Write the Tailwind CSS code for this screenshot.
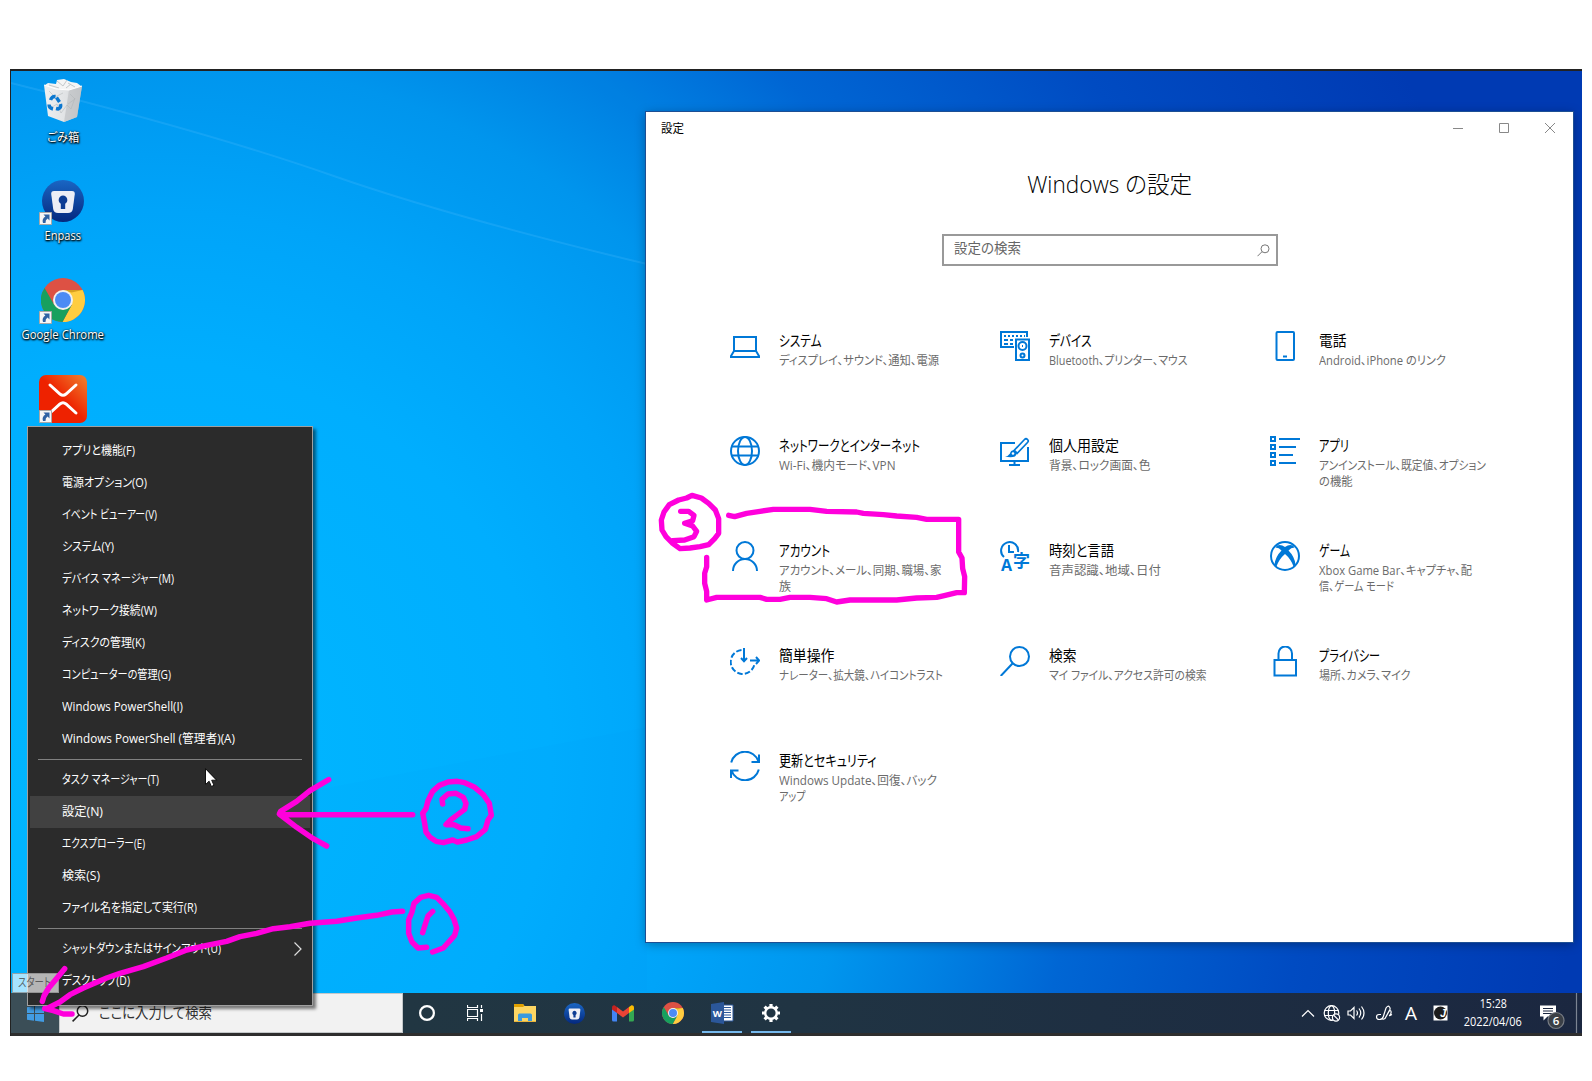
<!DOCTYPE html>
<html lang="ja">
<head>
<meta charset="utf-8">
<title>Windows の設定</title>
<script src="https://cdn.jsdelivr.net/npm/@tailwindcss/browser@4"></script>
</head>
<body class="bg-white overflow-hidden font-['Open_Sans','Noto_Sans_CJK_JP',sans-serif] [font-feature-settings:'palt']">

<svg class="absolute size-0" aria-hidden="true">
  <defs>
    <linearGradient id="enp" x1="0" y1="0" x2="0" y2="1"><stop offset="0" stop-color="#1a66c4"/><stop offset="1" stop-color="#04287e"/></linearGradient>
    <linearGradient id="xm" x1="0" y1="1" x2="1" y2="0"><stop offset=".5" stop-color="#ee2200"/><stop offset="1" stop-color="#ee8430"/></linearGradient>
    <linearGradient id="bin" x1="0" y1="0" x2="1" y2="0"><stop offset="0" stop-color="#eef0f1"/><stop offset=".6" stop-color="#e0e2e4"/><stop offset="1" stop-color="#b9bdc0"/></linearGradient>
    <symbol id="chrome" viewBox="0 0 44 44">
      <circle cx="22" cy="22" r="22" fill="#dd5144"/>
      <path d="M22 12H41.6A22 22 0 0 1 21.5 44L30.7 27z" fill="#ffcd40"/>
      <path d="M3.6 10A22 22 0 0 0 21.5 44L30.7 27 22 32 13.3 27z" fill="#17a05e"/>
      <path d="M22 12h19.6l-11 2.600z" fill="#d8a020"/>
      <circle cx="22" cy="22" r="10" fill="#f1f1f1"/><circle cx="22" cy="22" r="8" fill="#4c8bf5"/>
    </symbol>
    <symbol id="enpass" viewBox="0 0 42 42">
      <circle cx="21" cy="21" r="21" fill="url(#enp)"/>
      <path d="M12 11h18q3 0 2.800 3l-2 15q-.6 4-4.800 4H16q-4.200 0-4.800-4l-2-15Q9 11 12 11z" fill="#eceef6"/>
      <path d="M21 15.500a4.500 4.500 0 0 0-2.200 8.300V29h4.400v-5.200A4.500 4.500 0 0 0 21 15.500z" fill="#0c3c94"/>
    </symbol>
    <symbol id="shortcut" viewBox="0 0 13 13">
      <path d="M.5.500h12v12H.5z" fill="#f6f6f6" stroke="#a8a8a8"/>
      <path d="M4.500 2.500h6v6L8.600 6.600Q6.300 8 6.500 11H4Q2.500 7 6.400 4.500z" fill="#2e62a4"/>
    </symbol>
  </defs>
</svg>

<main class="relative w-[1592px] h-[1081px] pl-[10px] pt-[69px]">
  <div class="relative w-[1572px] h-[967px] flex flex-col overflow-hidden bg-[radial-gradient(circle_at_140px_690px,#00b8ff_0px,#00aefe_400px,#00a4f9_550px,#0096ee_705px,#0080e2_815px,#0066d4_930px,#004bc2_1160px,#003ab3_1430px)] border-t-2 border-l border-[#222]">
    <svg class="absolute left-0 top-0" width="640" height="920" fill="none" stroke="#5cc4ff">
      <path d="M0 12Q200 62 320 104T636 193" stroke-width="2" opacity=".22"/>
      <path d="M0 12Q200 62 320 104T636 193V0H0z" fill="#0070d0" stroke="none" opacity=".03"/>
      <path d="M300 720L636 656V920H300z" fill="#0080d8" stroke="none" opacity=".03"/>
    </svg>

    <!-- desktop icons -->
    <div class="relative flex-1 flex flex-col w-[104px] items-center text-[12px] leading-4 text-white [text-shadow:1px_1px_2px_#000,0_1px_2px_#000,0_0_2px_rgba(0,0,0,.7)]">
      <div class="h-[99px] pt-[8px] flex flex-col items-center">
        <svg width="38" height="44" viewBox="0 0 38 44">
          <path d="M1 6L4 4 12 5 13 1 20 0 27 3 33 4 37 7 35 11H3z" fill="#f4f5f5"/>
          <path d="M13 2l6 5 4-6M24 4l7 4M5 6l10 3M22 9l5-4" stroke="#c3c8ca" fill="none"/>
          <path d="M0 6L12 10 25 11 38 7 33 38 20 43 4 37z" fill="url(#bin)"/>
          <path d="M25 11L38 7 33 38 20 43z" fill="#c3c6c8" opacity=".8"/>
          <path d="M5 30l8-5 4 9 6-8 4 4 4-11M26 15l5 5-7 5M5 12l6 6 8-4" stroke="#aeb3b6" opacity=".5" fill="none"/>
          <path d="M0 6L12 10 25 11 38 7" stroke="#fff" fill="none"/>
          <path d="M6.500 21q1.500-4 5-3.500M12.500 18.500l3 4.500M16.500 25q1 4-2.500 5l-2-.5M5 25.500q0 3.500 4 4.500" stroke="#0b78d0" stroke-width="3.400" fill="none"/>
        </svg>
        <span data-w="32" class="mt-[7px] whitespace-nowrap inline-block">ごみ箱</span>
      </div>
      <div class="relative h-[99px] pt-[10px] flex flex-col items-center w-[42px]">
        <svg width="42" height="42"><use href="#enpass"/></svg>
        <svg class="absolute -left-[3px] top-[42px]" width="13" height="13"><use href="#shortcut"/></svg>
        <span data-w="36.5" class="mt-[6px] whitespace-nowrap inline-block">Enpass</span>
      </div>
      <div class="relative h-[99px] w-[46px] pt-[9px] flex flex-col items-center">
        <svg width="44" height="44"><use href="#chrome"/></svg>
        <svg class="absolute -left-[1px] top-[42px]" width="13" height="13"><use href="#shortcut"/></svg>
        <span data-w="82.5" class="mt-[5px] whitespace-nowrap inline-block">Google Chrome</span>
      </div>
      <div class="relative w-[48px] pt-[7px]">
        <svg width="48" height="48"><rect width="48" height="48" rx="7" fill="url(#xm)"/><path d="M11 10l10 9q3 2.500 6 0l10-9M11 38l10-9q3-2.500 6 0l10 9" stroke="#fff" stroke-width="3" stroke-linecap="round" fill="none"/></svg>
        <svg class="absolute left-0 top-[42px]" width="13" height="13"><use href="#shortcut"/></svg>
      </div>
    </div>

    <!-- settings window -->
    <section class="absolute left-[635px] top-[41px] w-[927px] h-[830px] bg-white outline outline-1 outline-[#1d4f94] shadow-[0_2px_10px_rgba(0,0,0,.35)]">
      <header class="h-8 flex items-center pl-[15px] text-[12px] text-black">
        <span data-w="23" class="inline-block origin-left mt-[2px]">設定</span>
        <div class="ml-auto flex text-[#888]">
          <svg width="46" height="32" fill="none" stroke="currentColor"><path d="M18 16.500h10"/></svg>
          <svg width="46" height="32" fill="none" stroke="currentColor"><path d="M18.500 11.500h9v9h-9z"/></svg>
          <svg width="46" height="32" fill="none" stroke="currentColor"><path d="M18 11l10 10M28 11L18 21"/></svg>
        </div>
      </header>
      <h1 class="mt-[22px] h-9 leading-9 text-center text-[24px] font-light text-black"><span data-w="165" class="inline-block whitespace-nowrap">Windows の設定</span></h1>
      <div class="mt-[32px] mx-auto w-[336px] h-[32px] border-2 border-[#999] flex items-center pl-[10px] pr-[6px] text-[14px] text-[#666]">
        <span data-w="67" class="inline-block origin-left whitespace-nowrap -mt-[5px]">設定の検索</span>
        <svg class="ml-auto" width="13" height="13" fill="none" stroke="#777"><circle cx="8" cy="4.800" r="4"/><path d="M5 7.700L.5 12.200"/></svg>
      </div>

      <div class="mt-[65px] ml-[84px] grid grid-cols-[270px_270px_270px] auto-rows-[105px] text-[12px] leading-4 text-[#6b6b6b] whitespace-nowrap">
        <a class="flex gap-[19px]">
          <svg width="30" height="30" fill="none" stroke="#0078d7" stroke-width="2"><path d="M4 6h22v14H4zM4 20l-3 5v1h28v-1l-3-5"/></svg>
          <div class="flex flex-col items-start -mt-px"><b class="inline-block origin-left font-normal text-[15px] leading-5 text-black" data-w="42.500">システム</b><span class="inline-block origin-left mt-[3px]" data-w="160">ディスプレイ、サウンド、通知、電源</span></div>
        </a>
        <a class="flex gap-[19px]">
          <svg width="30" height="30" fill="none" stroke="#0078d7" stroke-width="2"><path d="M14 16H1V1h26v5M4 5h2m2 0h2m2 0h2m2 0h2m2 0h2m2 0h1M4 9h4m2 0h3M4 13h4m2 0h3"/><path d="M16 8.500h13V29H16z"/><circle cx="22.500" cy="15" r="4"/><circle cx="22.500" cy="24.500" r="2"/><path d="M22 15h1"/></svg>
          <div class="flex flex-col items-start -mt-px"><b class="inline-block origin-left font-normal text-[15px] leading-5 text-black" data-w="42.500">デバイス</b><span class="inline-block origin-left mt-[3px]" data-w="138.500">Bluetooth、プリンター、マウス</span></div>
        </a>
        <a class="flex gap-[19px]">
          <svg width="30" height="30" fill="none" stroke="#0078d7" stroke-width="2"><rect x="6.500" y="1" width="17.500" height="28" rx="1"/><path d="M13 25.500h4"/></svg>
          <div class="flex flex-col items-start -mt-px"><b class="inline-block origin-left font-normal text-[15px] leading-5 text-black" data-w="27.500">電話</b><span class="inline-block origin-left mt-[3px]" data-w="127">Android、iPhone のリンク</span></div>
        </a>

        <a class="flex gap-[19px]">
          <svg width="30" height="30" fill="none" stroke="#0078d7" stroke-width="2"><circle cx="15" cy="15" r="14"/><ellipse cx="15" cy="15" rx="7" ry="14"/><path d="M2 10.500h26M2 19.500h26"/></svg>
          <div class="flex flex-col items-start -mt-px"><b class="inline-block origin-left font-normal text-[15px] leading-5 text-black" data-w="141">ネットワークとインターネット</b><span class="inline-block origin-left mt-[3px]" data-w="116.500">Wi-Fi、機内モード、VPN</span></div>
        </a>
        <a class="flex gap-[19px]">
          <svg width="30" height="30" fill="none" stroke="#0078d7" stroke-width="2"><path d="M15 7H1v18h27V11M14.500 25v4M9 29h11"/><path d="M5 20.500q3 0 5-3 1-4 5-3 3 3 0 6-4 1.500-10 0z" fill="#0078d7" stroke="none"/><path d="M14 14.500L24.500 3.500q1.500-1.500 3 0t0 3L17 17.500zM14 14l3.500 3.500" stroke-width="1.700"/><circle cx="13" cy="17.500" r="1.300" fill="#fff" stroke="none"/></svg>
          <div class="flex flex-col items-start -mt-px"><b class="inline-block origin-left font-normal text-[15px] leading-5 text-black" data-w="70">個人用設定</b><span class="inline-block origin-left mt-[3px]" data-w="101.500">背景、ロック画面、色</span></div>
        </a>
        <a class="flex gap-[19px]">
          <svg width="30" height="30" fill="none" stroke="#0078d7" stroke-width="2"><path d="M1 1h4v4H1zM1 9h4v4H1zM1 17h4v4H1zM1 25h4v4H1zM9 3h21M9 11h17M9 19h14M9 27h17"/></svg>
          <div class="flex flex-col items-start -mt-px"><b class="inline-block origin-left font-normal text-[15px] leading-5 text-black" data-w="30">アプリ</b><span class="inline-block origin-left mt-[3px]" data-w="167">アンインストール、既定値、オプション</span><span class="inline-block origin-left" data-w="33.500">の機能</span></div>
        </a>

        <a class="flex gap-[19px]">
          <svg width="30" height="30" fill="none" stroke="#0078d7" stroke-width="2"><circle cx="15" cy="9.500" r="8.500"/><path d="M3 30a12 12 0 0 1 24 0"/></svg>
          <div class="flex flex-col items-start -mt-px"><b class="inline-block origin-left font-normal text-[15px] leading-5 text-black" data-w="51">アカウント</b><span class="inline-block origin-left mt-[3px]" data-w="162.500">アカウント、メール、同期、職場、家</span><span class="inline-block origin-left" data-w="12">族</span></div>
        </a>
        <a class="flex gap-[19px]">
          <svg class="overflow-visible" width="30" height="30" fill="none" stroke="#0078d7" stroke-width="2"><path d="M4 16A8.500 8.500 0 1 1 18 11M9 4v7h5"/><text x="1" y="30" font-size="16" font-weight="700" fill="#0078d7" stroke="none">A</text><text x="13" y="26" font-size="17" font-weight="700" fill="#0078d7" stroke="none">字</text></svg>
          <div class="flex flex-col items-start -mt-px"><b class="inline-block origin-left font-normal text-[15px] leading-5 text-black" data-w="65">時刻と言語</b><span class="inline-block origin-left mt-[3px]" data-w="112">音声認識、地域、日付</span></div>
        </a>
        <a class="flex gap-[19px]">
          <svg width="30" height="30"><circle cx="15" cy="15" r="14" fill="none" stroke="#0078d7" stroke-width="2"/><path d="M7 4.500Q11 3 15 6q4-3 8-1.500l1.500 2Q21 6.500 18.500 9.500q6 6 7 14L24 26.500Q21 18 15 13 9 18 6 26.500L4.500 23.500q1-8 7-14Q9 6.500 5.500 6.500z" fill="#0078d7"/></svg>
          <div class="flex flex-col items-start -mt-px"><b class="inline-block origin-left font-normal text-[15px] leading-5 text-black" data-w="31">ゲーム</b><span class="inline-block origin-left mt-[3px]" data-w="153">Xbox Game Bar、キャプチャ、配</span><span class="inline-block origin-left" data-w="75">信、ゲーム モード</span></div>
        </a>

        <a class="flex gap-[19px]">
          <svg width="30" height="30" fill="none" stroke="#0078d7" stroke-width="2"><path d="M11.500 4A12 12 0 1 0 24.500 18" stroke-dasharray="5.500 2.200"/><path d="M14 2v13M20 14.500h9M11 12l3 3.200 3-3.200M26 11l3.200 3.500-3.200 3.500"/></svg>
          <div class="flex flex-col items-start -mt-px"><b class="inline-block origin-left font-normal text-[15px] leading-5 text-black" data-w="55.500">簡単操作</b><span class="inline-block origin-left mt-[3px]" data-w="164">ナレーター、拡大鏡、ハイコントラスト</span></div>
        </a>
        <a class="flex gap-[19px]">
          <svg width="30" height="30" fill="none" stroke="#0078d7" stroke-width="2"><circle cx="19.500" cy="10.500" r="9.500"/><path d="M12.500 17.500L.7 30"/></svg>
          <div class="flex flex-col items-start -mt-px"><b class="inline-block origin-left font-normal text-[15px] leading-5 text-black" data-w="27.500">検索</b><span class="inline-block origin-left mt-[3px]" data-w="157.500">マイ ファイル、アクセス許可の検索</span></div>
        </a>
        <a class="flex gap-[19px]">
          <svg width="30" height="31" fill="none" stroke="#0078d7" stroke-width="2"><path d="M4.500 14.500h21.500V30H4.500zM8.500 14V8a6.700 7 0 0 1 13.500 0v6" transform="translate(0 -.5)"/></svg>
          <div class="flex flex-col items-start -mt-px"><b class="inline-block origin-left font-normal text-[15px] leading-5 text-black" data-w="61">プライバシー</b><span class="inline-block origin-left mt-[3px]" data-w="91.500">場所、カメラ、マイク</span></div>
        </a>

        <a class="flex gap-[19px]">
          <svg width="30" height="30" fill="none" stroke="#0078d7" stroke-width="2"><path d="M1.200 11.500A14.200 14.200 0 0 1 28.500 10.500M29 3.500v7.500h-7.500M28.800 18.500A14.200 14.200 0 0 1 1.500 19.500M1 27v-7.500h7.500"/></svg>
          <div class="flex flex-col items-start -mt-px"><b class="inline-block origin-left font-normal text-[15px] leading-5 text-black" data-w="97.500">更新とセキュリティ</b><span class="inline-block origin-left mt-[3px]" data-w="158">Windows Update、回復、バック</span><span class="inline-block origin-left" data-w="26.500">アップ</span></div>
        </a>
      </div>
    </section>

    <!-- taskbar -->
    <footer class="relative h-[43px] flex bg-gradient-to-r from-[#223841] via-[#203443] to-[#1b2740] border-b-[3px] border-[#2e2e2e]">
      <div class="w-[48px] bg-[#3b4e57] flex items-center justify-center">
        <svg class="mt-[1px]" width="17" height="17" fill="#429ce3"><path d="M0 2.300L7 1.300V8H0zM8 1.200L17 0v8H8zM0 9h7v6.700L0 14.700zM8 9h9v8l-9-1.200z"/></svg>
      </div>
      <div class="w-[344px] bg-[#f2f2f2] border border-[#c4c8ca] flex items-center pl-[12px] text-[15px] text-[#333]">
        <svg width="17" height="17" fill="none" stroke="#222" stroke-width="1.500"><circle cx="10.500" cy="6" r="5.200"/><path d="M7 10L.6 16.400"/></svg>
        <span data-w="113" class="ml-[10px] inline-block origin-left whitespace-nowrap -mt-px">ここに入力して検索</span>
      </div>
      <div class="flex">
        <div class="w-[48px] flex items-center justify-center"><svg width="18" height="18" fill="none" stroke="#fff" stroke-width="2.200"><circle cx="9" cy="9" r="6.900"/></svg></div>
        <div class="w-[48px] flex items-center justify-center"><svg width="17" height="16" fill="none" stroke="#fff"><path d="M.5 0v2.500h10V0M.5 4.500h10v7H.5zM.5 16v-2.500h10V16M14.500 0v3M14.500 9v7" stroke-width="1.200"/><path d="M13 4h3v3h-3z" fill="#fff" stroke="none"/></svg></div>
        <div class="w-[52px] flex items-center justify-center"><svg width="22" height="18"><path d="M0 0h9l1.500 2H22v16H0z" fill="#fdd663"/><path d="M0 0h9l1.300 2L9 3H0z" fill="#e0a000"/><path d="M4 18V11q0-1.500 1.500-1.500h11Q18 9.500 18 11v7h-4v-4H8v4z" fill="#3b9ade"/><path d="M18 17h4v1H0v-1h4" fill="#e9b53c"/></svg></div>
        <div class="w-[47px] flex items-center justify-center"><svg width="21" height="21"><use href="#enpass"/></svg></div>
        <div class="w-[50px] flex items-center justify-center"><svg width="22" height="17"><path d="M0 3v12q0 1.500 1.500 1.500H5V7z" fill="#4285f4"/><path d="M22 3v12q0 1.500-1.500 1.500H17V7z" fill="#34a853"/><path d="M5 2l6 4.500L17 2v6l-6 4.500L5 8z" fill="#ea4335"/><path d="M0 3Q0 0 2.500.300L5 2v6L0 4.500z" fill="#c5221f"/><path d="M22 3q0-3-2.500-2.700L17 2v6l5-3.500z" fill="#fbbc04"/></svg></div>
        <div class="w-[49px] flex items-center justify-center"><svg width="22" height="22"><use href="#chrome"/></svg></div>
        <div class="w-[40px] flex items-center justify-center ml-[5px] border-b-2 border-[#76b9ed] pt-[2px]"><svg width="23" height="22"><path d="M11 3h11v16H11z" fill="#fff" stroke="#2b579a"/><path d="M13 5.500h7M13 8h7M13 10.500h7M13 13h7M13 15.500h7" stroke="#2b579a"/><path d="M0 2L13 0v22L0 20z" fill="#2b579a"/><text x="1.800" y="14.500" font-size="9.500" font-weight="700" fill="#fff">W</text></svg></div>
        <div class="w-[40px] flex items-center justify-center ml-[9px] border-b-2 border-[#76b9ed] pt-[2px]"><svg width="20" height="20" fill="none" stroke="#fff"><circle cx="10" cy="10" r="5.800" stroke-width="2.400"/><path d="M10 1v3M10 16v3M1 10h3M16 10h3M3.600 3.600l2.200 2.200M14.200 14.200l2.200 2.200M3.600 16.400l2.200-2.200M14.200 5.800l2.200-2.200" stroke-width="3.200"/></svg></div>
      </div>
      <div class="ml-auto relative w-[281px] flex items-center text-white">
        <svg class="shrink-0" width="281" height="40" fill="none" stroke="#fff" stroke-width="1.200">
          <path d="M1 23.500l6-6 6 6"/>
          <g transform="translate(1 0)"><circle cx="29.500" cy="20" r="7.300"/><ellipse cx="29.500" cy="20" rx="3.200" ry="7.300"/><path d="M22.500 17.500h14M22.500 22.500h14"/><circle cx="34" cy="24.500" r="3.600" fill="#1b2740"/><path d="M31.500 22l5 5"/></g>
          <path d="M47 18h2.500l3.500-3.500v11L49.500 22H47zM55.500 17.500q2 2.500 0 5M58 15.500q3.500 4.500 0 9M60.500 13.500q5 6.500 0 13"/>
          <path d="M80 21.500h-2q-2.500 0-2.500 2.500t3 2.500 4-3.500L85 15q2-3 3.500-1t-.5 4l-4 7.500-2.500 1M84 25.500l4-7q1.500-2 2 0t-1 3.500 2-.5"/>
          <path d="M132.500 12.500h14v15h-14z" fill="#fff" stroke="none"/><circle cx="139.500" cy="20" r="6.500" fill="#1c1c1c" stroke="none"/>
          <path d="M239 12.500h16v11h-8.500l-4 4v-4H239z" fill="#fff" stroke="none"/><path d="M242 15.500h10M242 18h10M242 20.500h10" stroke="#1b2740"/>
          <circle cx="255" cy="27.500" r="8" fill="#3a3f46" stroke="#777c84"/>
          <path d="M275.500 0v40" stroke="#7c8492"/>
          <text x="104" y="27" font-size="19" fill="#fff" stroke="none">A</text>
          <text x="139" y="23.500" font-size="11" font-weight="600" fill="#fff" stroke="none" font-family="Liberation Sans" font-style="italic">J</text>
          <text x="251.800" y="31.800" font-size="11.500" font-weight="600" fill="#fff" stroke="none">6</text>
        </svg>
        <div class="absolute left-[152px] top-[2px] w-[80px] flex flex-col items-center text-[12px] leading-[18px]"><span data-w="27" class="inline-block">15:28</span><span data-w="58" class="inline-block">2022/04/06</span></div>
      </div>
    </footer>

    <!-- Win+X menu -->
    <nav class="absolute left-[16px] top-[355px] w-[286px] h-[580px] bg-[#2b2b2b] border border-[#a0a0a0] shadow-[3px_3px_3px_rgba(0,0,0,.5)] py-[8px] px-[2px] text-[12px] leading-8 text-white whitespace-nowrap">
      <div class="h-8 pl-[32px]"><span data-w="73" class="inline-block origin-left">アプリと機能(F)</span></div>
      <div class="h-8 pl-[32px]"><span data-w="85" class="inline-block origin-left">電源オプション(O)</span></div>
      <div class="h-8 pl-[32px]"><span data-w="95" class="inline-block origin-left">イベント ビューアー(V)</span></div>
      <div class="h-8 pl-[32px]"><span data-w="52" class="inline-block origin-left">システム(Y)</span></div>
      <div class="h-8 pl-[32px]"><span data-w="112" class="inline-block origin-left">デバイス マネージャー(M)</span></div>
      <div class="h-8 pl-[32px]"><span data-w="95" class="inline-block origin-left">ネットワーク接続(W)</span></div>
      <div class="h-8 pl-[32px]"><span data-w="83" class="inline-block origin-left">ディスクの管理(K)</span></div>
      <div class="h-8 pl-[32px]"><span data-w="109" class="inline-block origin-left">コンピューターの管理(G)</span></div>
      <div class="h-8 pl-[32px]"><span data-w="121" class="inline-block origin-left">Windows PowerShell(I)</span></div>
      <div class="h-8 pl-[32px]"><span data-w="173" class="inline-block origin-left">Windows PowerShell (管理者)(A)</span></div>
      <div class="h-px bg-[#808080] my-[4px] mx-[8px]"></div>
      <div class="h-8 pl-[32px]"><span data-w="97" class="inline-block origin-left">タスク マネージャー(T)</span></div>
      <div class="h-8 pl-[32px] bg-[#414141]"><span data-w="41" class="inline-block origin-left">設定(N)</span></div>
      <div class="h-8 pl-[32px]"><span data-w="83" class="inline-block origin-left">エクスプローラー(E)</span></div>
      <div class="h-8 pl-[32px]"><span data-w="38" class="inline-block origin-left">検索(S)</span></div>
      <div class="h-8 pl-[32px]"><span data-w="135" class="inline-block origin-left">ファイル名を指定して実行(R)</span></div>
      <div class="h-px bg-[#808080] my-[4px] mx-[8px]"></div>
      <div class="h-8 pl-[32px] pr-[8px] flex items-center justify-between"><span data-w="159" class="inline-block origin-left">シャットダウンまたはサインアウト(U)</span><svg width="8" height="14" fill="none" stroke="#ddd" stroke-width="1.200"><path d="M.5.500L7 7 .5 13.500"/></svg></div>
      <div class="h-8 pl-[32px]"><span data-w="68" class="inline-block origin-left">デスクトップ(D)</span></div>
    </nav>

    <!-- start tooltip -->
    <div class="absolute left-[1px] top-[902px] w-[47px] h-[20px] bg-white/65 border border-[#888]/70 pl-[5px] text-[12px] leading-[18px] text-[#444]/80 whitespace-nowrap"><span data-w="33" class="inline-block origin-left">スタート</span></div>
  </div>

  <!-- pointer and pen strokes -->
  <svg class="absolute left-0 top-0" width="1592" height="1081" fill="none" stroke="#ff00dc" stroke-linecap="round" stroke-linejoin="round">
    <path d="M205.500 769v15.500l3.600-3.300 2.300 5.300 2.600-1.200-2.300-5.100h4.600z" fill="#fff" stroke="#111" stroke-width="1"/>
    <g transform="translate(0 740) scale(.33333)" stroke-width="16.500">
      <path d="M1238 224H842M986 119L930 152 890 184 842 214 838 222 890 262 940 296 980 318"/>
      <path d="M1372 124L1344 126 1318 136 1298 154 1284 182 1278 206 1268 220 1274 250 1278 276 1290 292 1308 304 1330 308 1358 300 1372 306 1400 300 1430 290 1456 268 1464 240 1474 226 1468 190 1450 164 1424 142 1394 128z"/>
      <path d="M1328 192L1326 178 1344 162 1368 160 1390 172 1398 190 1394 208 1370 226 1352 240 1338 254 1362 254 1382 264 1404 266"/>
      <path d="M1208 514L1176 516 1130 526 1070 534 1010 544 930 550 870 560 820 566 770 580 720 590 680 604 620 616 560 630 500 654 430 680 360 700 320 714 250 744 210 764 180 786 140 806M216 822H190L160 812 134 806M194 686L168 718 146 744 132 768 127 784"/>
      <path d="M1298 636L1330 624 1350 602 1364 586 1370 564 1362 538 1350 516 1328 490 1310 472 1286 466 1262 472 1242 490 1236 516 1226 540 1226 580 1236 606 1254 624 1280 622M1298 514L1284 528 1276 552 1268 578"/>
    </g>
    <g transform="translate(650 420) scale(.33333)" stroke-width="16">
      <path d="M126 226L110 234 86 240 58 254 42 276 34 300 36 330 48 350 68 370 90 386 120 384 150 380 176 374 194 356 206 340 206 296 196 270 176 250 154 234z"/>
      <path d="M92 274L116 274 132 286 128 302 104 310 128 318 140 334 132 350 104 360 68 362"/>
      <path d="M236 286L254 290 290 280 330 274 370 268H480L530 274 620 276 640 280 700 284 740 288 800 292 830 298H926V396L936 414 938 446 944 470 943 518H920L886 526 860 532 800 534 740 540H600L560 546 530 536 480 532H420L390 538H350L330 532H200L170 540V514L164 490V460L170 440V412"/>
    </g>
  </svg>
</main>

<script>
  // Keep each label at its nominal width whenever its natural size changes.
  function fit(el) {
    var w = parseFloat(getComputedStyle(el).width) || el.offsetWidth;
    if (w) el.style.transform = 'scaleX(' + (parseFloat(el.dataset.w) / w).toFixed(4) + ')';
  }
  var labels = document.querySelectorAll('[data-w]');
  var observer = new ResizeObserver(function (entries) {
    entries.forEach(function (e) { fit(e.target); });
  });
  labels.forEach(function (el) { observer.observe(el); });
  window.addEventListener('load', function () { labels.forEach(fit); });
</script>
</body>
</html>
